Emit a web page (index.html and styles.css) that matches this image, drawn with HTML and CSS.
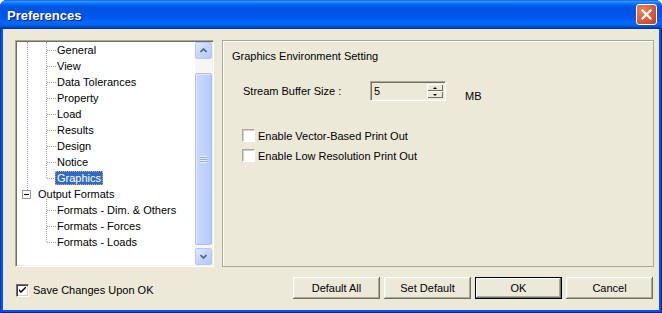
FILE: index.html
```html
<!DOCTYPE html>
<html lang="en">
<head>
    <meta charset="UTF-8">
    <title>Preferences</title>
    <link rel="stylesheet" href="styles.css">
</head>
<body>
    <div class="window">
        <div class="titlebar">
            <span class="title">Preferences</span>
            <div class="close-btn">
                <svg width="11" height="11" viewBox="0 0 11 11">
                    <path d="M1.5 1.5 L9.5 9.5 M9.5 1.5 L1.5 9.5" stroke="#fff" stroke-width="2.2" stroke-linecap="square"/>
                </svg>
            </div>
        </div>

        <div class="client">
            <div class="main">
                <!-- tree on the left -->
                <div class="tree-view">
                    <div class="tree">
                        <div class="root-group">
                            <div class="branch">
                                <div class="leaf">General</div>
                                <div class="leaf">View</div>
                                <div class="leaf">Data Tolerances</div>
                                <div class="leaf">Property</div>
                                <div class="leaf">Load</div>
                                <div class="leaf">Results</div>
                                <div class="leaf">Design</div>
                                <div class="leaf">Notice</div>
                                <div class="leaf"><span class="selected">Graphics</span></div>
                            </div>
                            <div class="node"><span class="expander"></span>Output Formats</div>
                        </div>
                        <div class="branch sub">
                            <div class="leaf">Formats - Dim. &amp; Others</div>
                            <div class="leaf">Formats - Forces</div>
                            <div class="leaf">Formats - Loads</div>
                        </div>
                    </div>
                    <div class="scrollbar">
                        <div class="sb-btn">
                            <svg width="7" height="5" viewBox="0 0 7 5"><path d="M0.5 4 L3.5 1 L6.5 4" fill="none" stroke="#4D6185" stroke-width="1.6"/></svg>
                        </div>
                        <div class="sb-track">
                            <div class="sb-thumb">
                                <span class="grip"></span>
                            </div>
                        </div>
                        <div class="sb-btn">
                            <svg width="7" height="5" viewBox="0 0 7 5"><path d="M0.5 1 L3.5 4 L6.5 1" fill="none" stroke="#4D6185" stroke-width="1.6"/></svg>
                        </div>
                    </div>
                </div>

                <!-- settings page -->
                <div class="panel">
                    <div class="panel-title">Graphics Environment Setting</div>
                    <div class="field">
                        <span class="field-label">Stream Buffer Size :</span>
                        <div class="spin">
                            <span class="spin-value">5</span>
                            <div class="spin-btns">
                                <span class="spin-btn up"></span>
                                <span class="spin-btn down"></span>
                            </div>
                        </div>
                        <span class="unit">MB</span>
                    </div>
                    <div class="options">
                        <label class="check"><span class="box"></span>Enable Vector-Based Print Out</label>
                        <label class="check"><span class="box"></span>Enable Low Resolution Print Out</label>
                    </div>
                </div>
            </div>

            <div class="footer">
                <label class="check save">
                    <span class="box checked">
                        <svg width="7" height="7" viewBox="0 0 7 7"><path d="M0 2 L0 4 L2 6 L7 1 L7 -1 L2 4 Z" fill="#000"/></svg>
                    </span>Save Changes Upon OK
                </label>
                <div class="buttons">
                    <div class="btn">Default All</div>
                    <div class="btn">Set Default</div>
                    <div class="btn default">OK</div>
                    <div class="btn">Cancel</div>
                </div>
            </div>
        </div>
    </div>
</body>
</html>
```

FILE: styles.css
```css
* {
    box-sizing: border-box;
}
body {
    margin: 0;
    background-color: #fff;
    font-family: "Liberation Sans", Arial, sans-serif;
    font-size: 11px;
    color: #000;
}
.window {
    width: 662px;
    height: 313px;
    display: flex;
    flex-direction: column;
    background-color: #0855DD;
    border-radius: 7px 7px 0 0;
    box-shadow: inset 1px 0 #0831D9, inset -1px 0 #001EA0, inset 0 -1px #001EA0;
    overflow: hidden;
}

/* XP title bar */
.titlebar {
    height: 29px;
    flex-shrink: 0;
    display: flex;
    align-items: center;
    justify-content: space-between;
    padding: 0 5px 0 7px;
    background: linear-gradient(to bottom, #0058EE 0%, #3593FF 4%, #288EFF 7%, #127DFF 10%, #036FFC 14%, #0262EE 18%, #0057E5 24%, #0054E3 30%, #0055EB 56%, #005BF5 66%, #026AFE 76%, #0062EF 86%, #0052D6 92%, #0040AB 96%, #003092 100%);
}
.title {
    color: #fff;
    font-weight: bold;
    font-size: 13px;
    text-shadow: 1px 1px #0A1883;
    padding-top: 1px;
}
.close-btn {
    width: 21px;
    height: 21px;
    border: 1px solid #fff;
    border-radius: 3px;
    background: radial-gradient(circle at 30% 30%, #E9865F 0%, #DC5B36 55%, #C23C16 100%);
    display: flex;
    align-items: center;
    justify-content: center;
}

.client {
    flex: 1;
    margin: 0 3px 3px 3px;
    background-color: #ECE9D8;
    display: flex;
    flex-direction: column;
    padding: 11px 5px 11px 12px;
}
.main {
    height: 227px;
    display: flex;
    gap: 8px;
}

/* tree */
.tree-view {
    width: 199px;
    display: flex;
    background-color: #fff;
    border: 1px solid;
    border-color: #ACA899 #fff #fff #ACA899;
    box-shadow: inset 1px 1px #716F64, inset -1px -1px #F1EFE2;
    padding: 1px;
}
.tree {
    flex: 1;
    position: relative;
    overflow: hidden;
}
.root-group,
.branch {
    position: relative;
}
.root-group::before {
    content: "";
    position: absolute;
    left: 10px;
    top: 0;
    bottom: 8px;
    border-left: 1px dotted #A0A0A0;
}
.branch::before {
    content: "";
    position: absolute;
    left: 29px;
    top: 0;
    bottom: 8px;
    border-left: 1px dotted #A0A0A0;
}
.branch.sub::before {
    top: -3px;
}
.leaf {
    position: relative;
    height: 16px;
    line-height: 16px;
    padding-left: 40px;
    white-space: nowrap;
}
.leaf::before {
    content: "";
    position: absolute;
    left: 30px;
    top: 8px;
    width: 9px;
    border-top: 1px dotted #A0A0A0;
}
.selected {
    display: inline-block;
    height: 14px;
    line-height: 14px;
    margin-left: -2px;
    padding: 0 2px;
    background-color: #316AC5;
    color: #fff;
    outline: 1px dotted #C8B060;
    outline-offset: -1px;
    vertical-align: top;
    margin-top: 1px;
}
.node {
    height: 16px;
    display: flex;
    align-items: center;
    padding-left: 5px;
    white-space: nowrap;
}
.expander {
    position: relative;
    width: 9px;
    height: 9px;
    margin-right: 7px;
    border: 1px solid #919B9C;
    background-color: #fff;
}
.expander::after {
    content: "";
    position: absolute;
    left: 1px;
    top: 3px;
    width: 5px;
    height: 1px;
    background-color: #000;
}

/* XP scrollbar */
.scrollbar {
    width: 17px;
    display: flex;
    flex-direction: column;
    background-color: #F7F6F1;
}
.sb-btn {
    height: 17px;
    display: flex;
    align-items: center;
    justify-content: center;
    background: linear-gradient(135deg, #E1EAFE 0%, #C5D5FC 50%, #B6CAF8 100%);
    border: 1px solid #B4C8F6;
    border-radius: 2px;
}
.sb-track {
    flex: 1;
    padding: 14px 0 3px 0;
    display: flex;
}
.sb-thumb {
    flex: 1;
    display: flex;
    align-items: center;
    justify-content: center;
    background: linear-gradient(to right, #C9D8FC 0%, #C1D3FB 50%, #B6CAF7 100%);
    border: 1px solid #A8BEF2;
    border-radius: 2px;
    box-shadow: inset 1px 1px #E4ECFE;
}
.grip {
    width: 7px;
    height: 7px;
    background: repeating-linear-gradient(to bottom, #EEF4FE 0 1px, #8CA9EC 1px 2px);
}

/* right panel */
.panel {
    flex: 1;
    border: 1px solid #ACA899;
    box-shadow: inset 1px 1px #fff;
    padding: 9px 9px;
}
.panel-title {
    line-height: 13px;
}
.field {
    display: flex;
    align-items: center;
    margin-top: 18px;
    padding-left: 11px;
    height: 20px;
}
.field-label {
    width: 127px;
}
.spin {
    width: 76px;
    height: 20px;
    display: flex;
    justify-content: space-between;
    border: 1px solid;
    border-color: #ACA899 #fff #fff #ACA899;
    box-shadow: inset 1px 1px #716F64, inset -1px -1px #F1EFE2;
    padding: 2px 2px 2px 3px;
}
.spin-value {
    line-height: 14px;
}
.spin-btns {
    width: 16px;
    display: flex;
    flex-direction: column;
}
.spin-btn {
    flex: 1;
    position: relative;
    background-color: #ECE9D8;
    box-shadow: inset 1px 1px #fff, inset -1px -1px #716F64;
}
.spin-btn::after {
    content: "";
    position: absolute;
    left: 6px;
    top: 3px;
    border-left: 2px solid transparent;
    border-right: 2px solid transparent;
}
.spin-btn.up::after {
    border-bottom: 2px solid #000;
}
.spin-btn.down::after {
    border-top: 2px solid #000;
}
.unit {
    margin-left: 19px;
    align-self: flex-end;
    margin-bottom: -1px;
}
.options {
    margin-top: 28px;
    padding-left: 10px;
    display: flex;
    flex-direction: column;
    gap: 7px;
}

/* checkboxes */
.check {
    display: flex;
    align-items: center;
    height: 13px;
}
.box {
    width: 13px;
    height: 13px;
    margin-right: 3px;
    display: flex;
    align-items: center;
    justify-content: center;
    background-color: #fff;
    border: 1px solid;
    border-color: #ACA899 #fff #fff #ACA899;
    box-shadow: inset 1px 1px #D4D0C8;
}
.box.checked {
    border-color: #716F64 #fff #fff #716F64;
    box-shadow: inset 1px 1px #404040, inset -1px -1px #D4D0C8;
}

/* bottom row */
.footer {
    margin-top: 10px;
    height: 22px;
    display: flex;
    align-items: center;
    justify-content: space-between;
}
.check.save {
    margin-left: 1px;
    margin-top: 4px;
}
.check.save .box {
    margin-right: 4px;
}
.buttons {
    display: flex;
    gap: 4px;
    margin-right: 1px;
}
.btn {
    width: 87px;
    height: 22px;
    display: flex;
    align-items: center;
    justify-content: center;
    background-color: #ECE9D8;
    box-shadow: inset -1px -1px #716F64, inset 1px 1px #fff, inset -2px -2px #ACA899, inset 2px 2px #F1EFE2;
}
.btn.default {
    box-shadow: inset 0 0 0 1px #000, inset -2px -2px #716F64, inset 2px 2px #fff, inset -3px -3px #ACA899;
}
```
